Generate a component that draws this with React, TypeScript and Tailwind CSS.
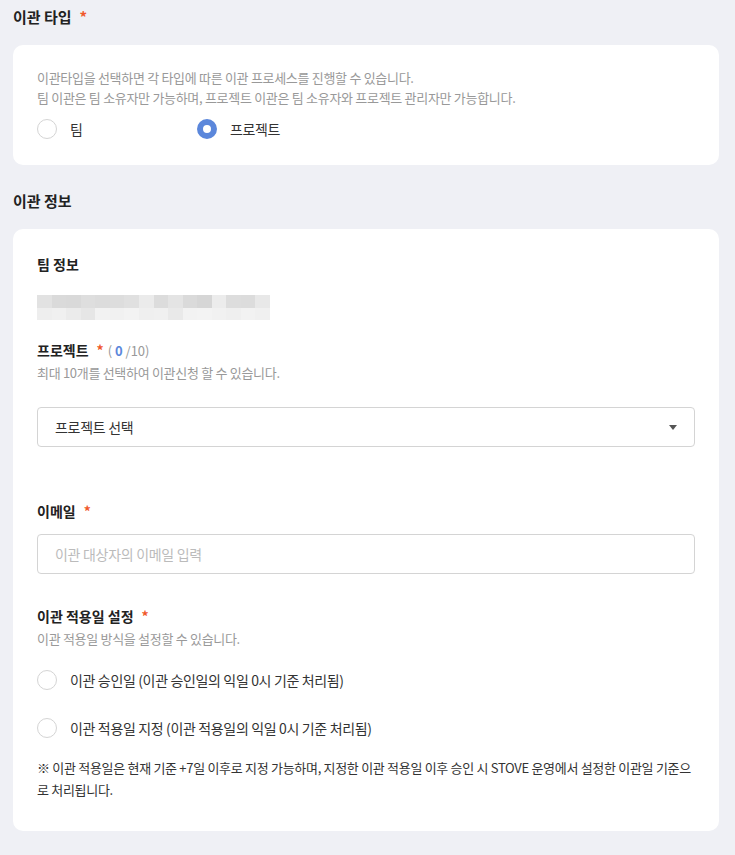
const FONT = "font-['Noto_Sans_CJK_KR','Noto_Sans',sans-serif]";

const MOSAIC_TOP = ["#e2e2e2", "#dadada", "#d9d9d9", "#dedede", "#dcdcdc", "#dddddd", "#e0e0e0", "#ebebeb", "#dcdcdc", "#e4e4e4", "#dadada", "#d6d6d6", "#ececec", "#dddddd", "#dcdcdc", "#e8e8e8"];
const MOSAIC_BOTTOM = ["#eeeeee", "#f0f0f0", "#ebebeb", "#e6e6e6", "#f2f2f2", "#f1f1f1", "#f3f3f3", "#efefef", "#f0f0f0", "#e9e9e9", "#f2f2f2", "#f3f3f3", "#f1f1f1", "#efefef", "#f2f2f2", "#f0f0f0"];

function Star() {
  return <span className="ml-2 text-[#f0582a]">*</span>;
}

function Radio({ checked, label, className = "" }: { checked?: boolean; label: string; className?: string }) {
  return (
    <label className={`flex items-center gap-[13px] ${className}`}>
      <span
        className={`h-5 w-5 shrink-0 rounded-full ${
          checked ? "border-[6px] border-[#5b87db] bg-white" : "border border-[#d4d4d4] bg-white"
        }`}
      />
      <span className="text-[14px] leading-5 tracking-[-0.35px] text-[#333]">{label}</span>
    </label>
  );
}

export default function App() {
  return (
    <main className={`min-h-[855px] bg-[#eff0f5] pl-[13px] pr-4 pt-[6px] ${FONT}`}>
      <h2 className="mb-[17px] text-[15px] font-bold leading-[22px] text-[#222]">
        이관 타입
        <Star />
      </h2>

      <section className="rounded-[10px] bg-white px-6 pb-[26px] pt-[23px]">
        <p className="text-[13px] leading-5 tracking-[-0.3px] text-[#999]">
          이관타입을 선택하면 각 타입에 따른 이관 프로세스를 진행할 수 있습니다.
          <br />
          팀 이관은 팀 소유자만 가능하며, 프로젝트 이관은 팀 소유자와 프로젝트 관리자만 가능합니다.
        </p>
        <div className="mt-[11px] flex items-center">
          <Radio label="팀" className="w-[160px]" />
          <Radio label="프로젝트" checked />
        </div>
      </section>

      <h2 className="mb-[17px] mt-[25px] text-[15px] font-bold leading-[22px] text-[#222]">이관 정보</h2>

      <section className="rounded-[10px] bg-white px-6 pb-[30px] pt-[25px]">
        <h3 className="text-[14px] font-bold leading-5 text-[#222]">팀 정보</h3>

        <div className="mt-[21px] flex w-[233px] flex-col overflow-hidden">
          <div className="flex h-[13px]">
            {MOSAIC_TOP.map((c, i) => (
              <div key={i} className="h-full flex-1" style={{ backgroundColor: c }} />
            ))}
          </div>
          <div className="flex h-3">
            {MOSAIC_BOTTOM.map((c, i) => (
              <div key={i} className="h-full flex-1" style={{ backgroundColor: c }} />
            ))}
          </div>
        </div>

        <div className="mt-5 flex items-baseline">
          <h3 className="text-[14px] font-bold leading-5 text-[#222]">프로젝트</h3>
          <span className="ml-2 text-[14px] font-bold text-[#f0582a]">*</span>
          <span className="ml-1 text-[13px] text-[#999]">
            ( <span className="font-bold text-[#5b87db]">0</span> /10)
          </span>
        </div>
        <p className="mt-0.5 text-[13px] leading-5 tracking-[-0.3px] text-[#999]">최대 10개를 선택하여 이관신청 할 수 있습니다.</p>

        <div className="mt-6 flex h-10 items-center justify-between rounded-[4px] border border-[#d4d4d4] pl-[17px] pr-[17px]">
          <span className="text-[14px] tracking-[-0.3px] text-[#333]">프로젝트 선택</span>
          <span className="h-0 w-0 border-x-[4px] border-t-[5px] border-x-transparent border-t-[#555]" />
        </div>

        <h3 className="mt-[54px] text-[14px] font-bold leading-5 text-[#222]">
          이메일
          <Star />
        </h3>
        <div className="mt-[13px] flex h-10 items-center rounded-[4px] border border-[#d4d4d4] pl-[17px]">
          <span className="text-[14px] tracking-[-0.3px] text-[#bbb]">이관 대상자의 이메일 입력</span>
        </div>

        <h3 className="mt-8 text-[14px] font-bold leading-5 text-[#222]">
          이관 적용일 설정
          <Star />
        </h3>
        <p className="mt-[3px] text-[13px] leading-5 tracking-[-0.3px] text-[#999]">이관 적용일 방식을 설정할 수 있습니다.</p>

        <div className="mt-[21px] flex flex-col gap-7">
          <Radio label="이관 승인일 (이관 승인일의 익일 0시 기준 처리됨)" />
          <Radio label="이관 적용일 지정 (이관 적용일의 익일 0시 기준 처리됨)" />
        </div>

        <p className="mt-[19px] break-all text-[13px] leading-[22px] tracking-[-0.3px] text-[#333]">
          ※ 이관 적용일은 현재 기준 +7일 이후로 지정 가능하며, 지정한 이관 적용일 이후 승인 시 STOVE 운영에서 설정한 이관일 기준으로 처리됩니다.
        </p>
      </section>
    </main>
  );
}
